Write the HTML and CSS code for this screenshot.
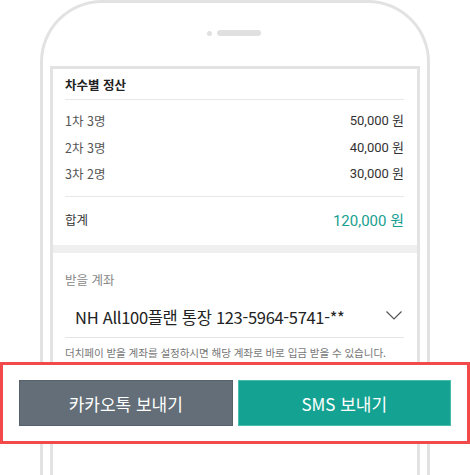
FILE: index.html
```html
<!DOCTYPE html>
<html lang="ko">
<head>
<meta charset="utf-8">
<link rel="stylesheet" href="styles.css">
</head>
<body>
<div class="stage">
  <div class="phone">
    <div class="speaker"><span class="dot"></span><span class="bar"></span></div>
    <div class="screen">
      <section class="settle">
        <h2 class="title">차수별 정산</h2>
        <ul class="rows">
          <li class="row"><span>1차 3명</span><span class="amt">50,000 원</span></li>
          <li class="row"><span>2차 3명</span><span class="amt">40,000 원</span></li>
          <li class="row"><span>3차 2명</span><span class="amt">30,000 원</span></li>
        </ul>
        <div class="total"><span>합계</span><span class="total-amt">120,000 원</span></div>
      </section>
      <div class="band"></div>
      <section class="account">
        <div class="label">받을 계좌</div>
        <div class="select">
          <span class="acct">NH All100플랜 통장 123-5964-5741-**</span>
          <svg class="chev" width="16" height="9" viewBox="0 0 16 9"><path d="M0.5 0.5 L8 8 L15.5 0.5" fill="none" stroke="#555" stroke-width="1.2"/></svg>
        </div>
        <p class="help">더치페이 받을 계좌를 설정하시면 해당 계좌로 바로 입금 받을 수 있습니다.</p>
      </section>
    </div>
  </div>
  <div class="highlight">
    <button class="btn btn-kakao">카카오톡 보내기</button>
    <button class="btn btn-sms">SMS 보내기</button>
  </div>
</div>
</body>
</html>
```
FILE: styles.css
```css
* { box-sizing: border-box; }
html, body { margin: 0; padding: 0; background: #fff; overflow: hidden; }
body {
  width: 470px;
  height: 475px;
  font-family: "Noto Sans CJK KR", "Noto Sans", sans-serif;
  color: #333;
}
.stage { position: relative; width: 470px; height: 475px; overflow: hidden; }

.phone {
  margin-left: 40px;
  width: 390px;
  height: 560px;
  border: 3px solid #e2e2e2;
  border-bottom: none;
  border-radius: 62px 62px 0 0;
  padding: 27px 7px 0;
}
.speaker {
  display: flex;
  justify-content: center;
  align-items: center;
  gap: 5px;
  height: 6px;
  margin-left: -2px;
}
.speaker .dot { width: 5px; height: 5px; border-radius: 50%; background: #e0e0e0; }
.speaker .bar { width: 44px; height: 6px; border-radius: 3px; background: #e0e0e0; }

.screen {
  margin-top: 30px;
  width: 370px;
  height: 500px;
  border: 3px solid #e3e3e3;
}

.settle { padding: 0 13px 0 12px; }
.title {
  margin: 0;
  height: 31px;
  line-height: 31px;
  font-size: 12.5px;
  font-weight: 700;
  color: #222;
  border-bottom: 1px solid #e8e8e8;
}
.rows {
  list-style: none;
  margin: 0;
  padding: 8px 0 8px;
  border-bottom: 1px solid #e8e8e8;
}
.row {
  display: flex;
  justify-content: space-between;
  height: 26.5px;
  line-height: 26.5px;
  font-size: 12.5px;
  color: #555;
}
.row .amt {
  color: #333;
  font-size: 13px;
  font-family: Roboto, "Noto Sans CJK KR", sans-serif;
}
.total {
  display: flex;
  justify-content: space-between;
  align-items: center;
  height: 48px;
  padding-bottom: 3px;
  font-size: 12.5px;
  color: #333;
}
.total-amt {
  color: #17a090;
  font-size: 15px;
  font-family: Roboto, "Noto Sans CJK KR", sans-serif;
}

.band { height: 8px; background: #efefef; }

.account { padding: 17px 13px 0 12px; }
.label {
  height: 20px;
  line-height: 20px;
  font-size: 12.5px;
  color: #888;
}
.select {
  display: flex;
  justify-content: space-between;
  align-items: center;
  margin-top: 15px;
  padding: 0 2px 8px 10px;
  border-bottom: 1px solid #e5e5e5;
}
.acct {
  height: 24px;
  line-height: 24px;
  font-size: 16.5px;
  color: #222;
  letter-spacing: -0.3px;
}
.chev { margin-top: -2px; }
.help {
  margin: 7px 0 0;
  line-height: 16px;
  font-size: 10.6px;
  color: #777;
  letter-spacing: -0.1px;
}

.highlight {
  position: absolute;
  left: 0;
  top: 362px;
  width: 470px;
  height: 82px;
  border: 3px solid #f24a4a;
  background: #fff;
  display: flex;
  gap: 5px;
  padding: 15px 16px 0;
}
.btn {
  flex: 1;
  height: 46px;
  font-family: inherit;
  font-size: 17px;
  color: #fff;
  cursor: pointer;
}
.btn-kakao { background: #636e78; border: 1px solid #56616a; }
.btn-sms { background: #14a392; border: 1px solid #48bdae; }
```
